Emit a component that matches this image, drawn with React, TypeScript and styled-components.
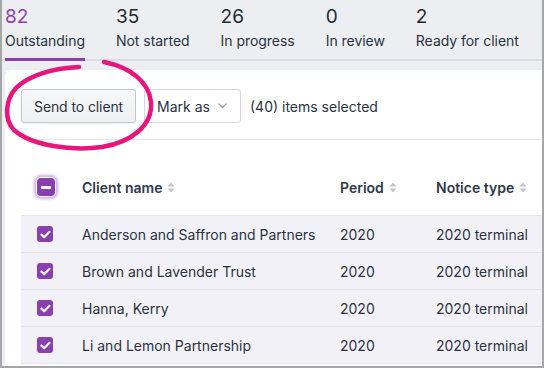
import React from "react";
import styled, { createGlobalStyle } from "styled-components";

const GlobalStyle = createGlobalStyle`
  html, body {
    margin: 0;
    padding: 0;
    background: #eceef2;
  }
  body {
    font-family: Inter, "Noto Sans", "Liberation Sans", sans-serif;
    -webkit-font-smoothing: antialiased;
  }
`;

const tabs = [
  { count: 82, label: "Outstanding", active: true },
  { count: 35, label: "Not started" },
  { count: 26, label: "In progress" },
  { count: 0, label: "In review" },
  { count: 2, label: "Ready for client" },
];

const rows = [
  { name: "Anderson and Saffron and Partners", period: "2020", notice: "2020 terminal" },
  { name: "Brown and Lavender Trust", period: "2020", notice: "2020 terminal" },
  { name: "Hanna, Kerry", period: "2020", notice: "2020 terminal" },
  { name: "Li and Lemon Partnership", period: "2020", notice: "2020 terminal" },
];

function SortIcon(): JSX.Element {
  return (
    <svg width="8" height="11" viewBox="0 0 8 11">
      <path d="M4 0.5 L7.5 4.5 H0.5 Z" fill="#c2c6cc" />
      <path d="M4 10.5 L7.5 6.5 H0.5 Z" fill="#c2c6cc" />
    </svg>
  );
}

function Chevron(): JSX.Element {
  return (
    <svg width="9" height="6" viewBox="0 0 9 6">
      <path d="M1 1 L4.5 4.5 L8 1" fill="none" stroke="#9aa0a8" strokeWidth="1.2" strokeLinecap="round" strokeLinejoin="round" />
    </svg>
  );
}

function Tick(): JSX.Element {
  return (
    <svg width="11" height="9" viewBox="0 0 11 9">
      <path d="M1.5 4.6 L4.2 7.2 L9.5 1.8" fill="none" stroke="#fff" strokeWidth="2.2" strokeLinecap="round" strokeLinejoin="round" />
    </svg>
  );
}

function App(): JSX.Element {
  return (
    <Frame>
      <GlobalStyle />
      <TabBar>
        {tabs.map((t) => (
          <Tab key={t.label} $active={!!t.active}>
            <TabCount $active={!!t.active}>{t.count}</TabCount>
            <TabLabel>{t.label}</TabLabel>
          </Tab>
        ))}
      </TabBar>

      <Panel>
        <Toolbar>
          <SendButton>Send to client</SendButton>
          <MarkButton>
            Mark as
            <Chevron />
          </MarkButton>
          <Selected>(40) items selected</Selected>
        </Toolbar>

        <Table>
          <HeadRow>
            <Cell>
              <Indeterminate />
            </Cell>
            <HeadCell>Client name <SortIcon /></HeadCell>
            <HeadCell>Period <SortIcon /></HeadCell>
            <HeadCell>Notice type <SortIcon /></HeadCell>
          </HeadRow>
          {rows.map((r) => (
            <BodyRow key={r.name}>
              <Cell>
                <Check>
                  <Tick />
                </Check>
              </Cell>
              <Cell>{r.name}</Cell>
              <Cell>{r.period}</Cell>
              <Cell>{r.notice}</Cell>
            </BodyRow>
          ))}
        </Table>
      </Panel>

      <Scribble width="544" height="368" viewBox="0 0 544 368">
        <path
          d="M102 62 C128 67 147 82 149 102 C151 125 130 142 100 147 C70 151 30 146 12 130 C2 120 3 100 14 88 C26 76 50 68 77 67"
          fill="none"
          stroke="#e8157c"
          strokeWidth="4.5"
          strokeLinecap="round"
        />
      </Scribble>
    </Frame>
  );
}

const Frame = styled.div`
  position: relative;
  width: 544px;
  height: 368px;
  box-sizing: border-box;
  border: 2px solid #a5a6a8;
  border-top: none;
  padding-left: 3px;
  background: #eceef2;
  overflow: hidden;
  color: #283241;
`;

const TabBar = styled.div`
  display: flex;
  gap: 31px;
  height: 61px;
  box-shadow: inset 0 -2px 0 #d9dce1;
  margin-left: -3px;
  padding-left: 3px;
`;

const Tab = styled.div<{ $active: boolean }>`
  display: flex;
  flex-direction: column;
  padding-top: 5px;
  box-sizing: border-box;
  height: 61px;
  border-bottom: 3px solid ${(p) => (p.$active ? "#8a3fb1" : "transparent")};
`;

const TabCount = styled.div<{ $active: boolean }>`
  font-size: 19px;
  line-height: 23px;
  color: ${(p) => (p.$active ? "#8a3fb1" : "#222a35")};
`;

const TabLabel = styled.div`
  margin-top: 4px;
  font-size: 14px;
  line-height: 17px;
  letter-spacing: -0.04px;
  color: #2a3341;
  white-space: nowrap;
`;

const Panel = styled.div`
  margin-top: 9px;
  background: #fff;
  border-top-left-radius: 6px;
  height: 300px;
`;

const Toolbar = styled.div`
  display: flex;
  align-items: center;
  margin-left: 16px;
  padding: 19px 0 16px;
  border-bottom: 1px solid #e4e6e9;
  font-size: 14px;
`;

const SendButton = styled.button`
  height: 34px;
  padding: 0 12px;
  font: inherit;
  font-size: 14px;
  letter-spacing: -0.1px;
  color: #2a3341;
  background: linear-gradient(#f7f8f9, #eff0f2);
  border: 1px solid #c3c7cd;
  border-radius: 3px;
  box-shadow: 0 1px 1px rgba(0, 0, 0, 0.06);
`;

const MarkButton = styled.button`
  display: flex;
  align-items: center;
  gap: 8px;
  height: 34px;
  margin-left: 8px;
  padding: 0 13px 0 12px;
  font: inherit;
  font-size: 14px;
  color: #2a3341;
  background: #fff;
  border: 1px solid #d4d7dc;
  border-radius: 3px;
`;

const Selected = styled.span`
  margin-left: 9px;
  color: #2a3341;
`;

const Table = styled.div`
  margin: 19px 0 0 16px;
  font-size: 14px;
`;

const rowGrid = `
  display: grid;
  grid-template-columns: 61px 258px 96px 1fr;
  align-items: center;
  white-space: nowrap;
`;

const HeadRow = styled.div`
  ${rowGrid}
  height: 56px;
  border-bottom: 1px solid #e6e4ec;
  font-weight: 600;
  color: #2f394a;
`;

const BodyRow = styled.div`
  ${rowGrid}
  height: 37px;
  box-sizing: border-box;
  background: #f3f1f8;
  border-bottom: 1px solid #e6e3ee;
  color: #2b3340;
`;

const Cell = styled.div`
  display: flex;
  align-items: center;
  &:first-child {
    padding-left: 16px;
  }
`;

const HeadCell = styled(Cell)`
  gap: 5px;
  & svg {
    margin-top: 1px;
  }
`;

const Indeterminate = styled.span`
  position: relative;
  width: 18px;
  height: 18px;
  box-sizing: border-box;
  border-radius: 4px;
  background: #8a3fb1;
  box-shadow: 0 0 0 1px #fff, 0 0 3px 3px rgba(166, 112, 206, 0.55);
  &::after {
    content: "";
    position: absolute;
    left: 4px;
    top: 7.5px;
    width: 10px;
    height: 3px;
    border-radius: 1px;
    background: #fff;
  }
`;

const Check = styled.span`
  display: flex;
  align-items: center;
  justify-content: center;
  width: 16px;
  height: 16px;
  border-radius: 3px;
  background: #8a3fb1;
`;

const Scribble = styled.svg`
  position: absolute;
  left: 0;
  top: 0;
  pointer-events: none;
`;

export default App;
